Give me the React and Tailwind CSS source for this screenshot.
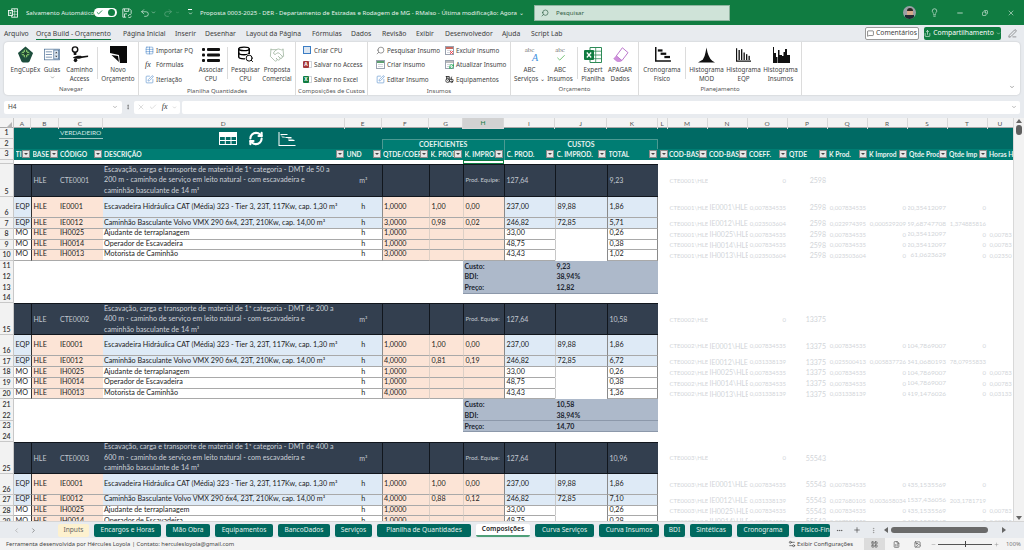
import {
  Search, Undo2, Redo2, ChevronDown, ChevronLeft, ChevronRight, X, Check, Lightbulb, Minus, Copy,
  MessageSquare, Share, PenLine, Tractor, Handshake, RefreshCw, Table, Plus, MoreHorizontal, MoreVertical,
  Database, SquarePen, Image, FileSpreadsheet, Settings2, LayoutGrid,
} from "lucide-react"
import clsx from "clsx"

const SHEET_COLS = "grid grid-cols-[14px_17px_27.5px_44px_242.5px_36.5px_47.5px_34px_41px_51px_52px_51px_9.5px_40px_40px_40px_40px_40px_40px_40px_40px_26px]"

/* ---------- small drawings ---------- */

function ExcelMark() {
  return (
    <svg viewBox="0 0 12 12" className="w-[10px] h-[10px]" fill="none" stroke="white" strokeWidth="1">
      <rect x="4.5" y="1" width="7" height="10" />
      <path d="M8 1v10M4.5 4.3h7M4.5 7.6h7" strokeWidth=".6" />
      <rect x=".5" y="3" width="5" height="6" fill="#107c41" />
      <path d="M1.8 4.4l2.4 3.2M4.2 4.4L1.8 7.6" strokeWidth=".8" />
    </svg>
  )
}

function EngLogo() {
  return (
    <svg viewBox="0 0 18 18" className="w-[17px] h-[17px]">
      <path d="M9 .5L17 7.5 13.5 16a2 2 0 0 1-2 1.5h-5a2 2 0 0 1-2-1.5L1 7.5z" fill="#1d4d3c" />
      <path d="M9 3l5 5-5 5-5-5z" fill="#7fc06b" />
      <path d="M7 6l4 4M11 6l-4 4M9 3.5v9M4.5 8h9" stroke="#17352c" strokeWidth=".9" />
    </svg>
  )
}

function GuiasIcon() {
  return (
    <svg viewBox="0 0 18 14" className="w-[16px] h-[13px]" fill="none" stroke="#4a6d94" strokeWidth=".8">
      <rect x=".5" y="1" width="17" height="12" fill="#fff" />
      <path d="M2 4h7M2 7h7M2 10h7" />
      <rect x="11" y="2" width="5.5" height="10" fill="#dce6f1" />
      <path d="M12.5 5.5l1.3-1.6 1.3 1.6zM12.5 8.5l1.3 1.6 1.3-1.6z" fill="#333" stroke="none" />
    </svg>
  )
}

function PathIcon() {
  return (
    <svg viewBox="0 0 20 18" className="w-[18px] h-[17px]" fill="#111">
      <circle cx="4.5" cy="3.5" r="3" fill="none" stroke="#111" strokeWidth="1.6" />
      <rect x="3" y="6.5" width="3" height="3" />
      <path d="M2 12.5c3-2 8-2.5 10-1.5l7-.8v1.6l-7 1.2c-2 1.2-7 1.2-10-.5z" />
      <circle cx="5" cy="15.5" r="2" />
    </svg>
  )
}

function NewBudgetIcon() {
  return (
    <svg viewBox="0 0 18 18" className="w-[17px] h-[17px]" fill="#0a0a0a">
      <path d="M0 0h18v18h-7.5L9.5 9.5 0 7.5z" />
      <path d="M1.5 9.5l7 1 1 6.5z" />
    </svg>
  )
}

function ListIcon() {
  return (
    <svg viewBox="0 0 18 16" className="w-[18px] h-[16px]" fill="#111">
      <rect x="0" y="1" width="3" height="3" rx="1" />
      <rect x="5" y="1" width="13" height="3" rx="1" />
      <rect x="0" y="6.5" width="3" height="3" rx="1" />
      <rect x="5" y="6.5" width="13" height="3" rx="1" />
      <rect x="0" y="12" width="3" height="3" rx="1" />
      <rect x="5" y="12" width="13" height="3" rx="1" />
    </svg>
  )
}

function DbSearch() {
  return (
    <span className="relative block w-[17px] h-[17px]">
      <Database className="w-[14px] h-[14px] text-black" strokeWidth={2.4} />
      <Search className="absolute right-0 bottom-0 w-[9px] h-[9px] text-black bg-white rounded-full" strokeWidth={2.6} />
    </span>
  )
}

function AppBadge({ letter, color }) {
  return (
    <span className="relative block w-[9px] h-[9px]">
      <span className="absolute right-0 top-[1px] w-[6px] h-[7px] bg-white border border-gray-300" />
      <span className={clsx("absolute left-0 top-[1px] w-[6px] h-[7px] rounded-[1px] text-white text-[5px] font-bold leading-[7px] text-center", color)}>{letter}</span>
    </span>
  )
}

function MiniTable({ accent, children }) {
  return (
    <span className="relative block w-[9px] h-[9px] border border-gray-400 bg-white">
      <span className={clsx("block h-[2px]", accent)} />
      <span className="block h-[1px] mt-[1px] mx-[1px] bg-gray-300" />
      <span className="block h-[1px] mt-[1px] mx-[1px] bg-gray-300" />
      {children}
    </span>
  )
}

function ExcelBig() {
  return (
    <svg viewBox="0 0 18 16" className="w-[18px] h-[16px]">
      <path d="M6 .5h11.5v15H6z" fill="#fff" stroke="#2e8b57" />
      <path d="M6 4.2h11.5M6 8h11.5M6 11.7h11.5M11.7.5v15" stroke="#2e8b57" strokeWidth=".8" />
      <rect x="0" y="3" width="10" height="10" rx="1" fill="#107c41" />
      <path d="M2.8 5.5l4.4 5M7.2 5.5l-4.4 5" stroke="#fff" strokeWidth="1.2" />
    </svg>
  )
}

function EraserIcon() {
  return (
    <svg viewBox="0 0 18 16" className="w-[17px] h-[15px]">
      <path d="M11 .8l6 5.2-6.5 8.5-6-5z" fill="#fff" stroke="#b86fc9" />
      <path d="M4.5 9.5l6 5-2 1h-3L1.8 12.5z" fill="#cf8fdc" stroke="#b86fc9" strokeWidth=".6" />
    </svg>
  )
}

function GanttIcon() {
  return (
    <svg viewBox="0 0 18 16" className="w-[17px] h-[15px]" fill="#111">
      <path d="M1 0h1.6v14H18v1.6H1z" />
      <rect x="4" y="2.5" width="5" height="2.4" />
      <rect x="7" y="6" width="6" height="2.4" />
      <rect x="11" y="9.5" width="6" height="2.4" />
    </svg>
  )
}

function HistoArea() {
  return (
    <svg viewBox="0 0 18 16" className="w-[17px] h-[16px]" fill="#111">
      <path d="M0 16l3-2 2-1 2-4 1-4 1-5 1 5 1 3 2 4 2 2 3 2z" />
    </svg>
  )
}

function HistoBars() {
  return (
    <svg viewBox="0 0 18 16" className="w-[15px] h-[14px]" fill="#111">
      <path d="M0 0h1.4v14.6H18V16H0z" />
      <rect x="3" y="2" width="1.6" height="12" />
      <rect x="6" y="1" width="1.6" height="13" />
      <rect x="9" y="5" width="1.6" height="9" />
      <rect x="12" y="7" width="1.6" height="7" />
      <rect x="15" y="9" width="1.6" height="5" />
    </svg>
  )
}

function HistoDense() {
  return (
    <svg viewBox="0 0 18 16" className="w-[18px] h-[16px]" fill="#111">
      <path d="M1 0h1v16H1zM2 6h2v10H2zM4 10h1.5v6H4zM6 3h1.5v13H6zM7.5 8H10v8H7.5zM10 9h1.5v7H10zM11.5 5H13v11h-1.5zM13 2h2v14h-2zM15 8h3v8h-3z" />
    </svg>
  )
}

/* ---------- window chrome ---------- */

function TitleBar() {
  return (
    <div className="h-[25px] bg-[#107c41] flex items-center text-white text-[6.1px] font-['Noto_Sans',sans-serif] shrink-0">
      <span className="ml-[8px] w-[18px]"><ExcelMark /></span>
      <span className="w-[68px] opacity-90 whitespace-nowrap">Salvamento Automático</span>
      <span className="w-[23px] h-[9px] rounded-full bg-white flex items-center justify-between px-[2px]">
        <Check className="w-[7px] h-[7px] text-[#107c41]" strokeWidth={3} />
        <span className="w-[7px] h-[7px] rounded-full bg-[#107c41]" />
      </span>
      <svg viewBox="0 0 12 12" className="ml-[5px] w-[10px] h-[10px]" fill="none" stroke="white" strokeWidth=".9">
        <path d="M1 1h8l2 2v4M1 1v10h4M3 1v3h5V1M3 11V7h3" />
        <path d="M7.5 9.5a2 2 0 0 1 3.5-1M11 10a2 2 0 0 1-3.5.8" />
      </svg>
      <Undo2 className="ml-[8px] w-[10px] h-[10px]" strokeWidth={1.4} />
      <ChevronDown className="ml-[1px] w-[5px] h-[5px]" />
      <Redo2 className="ml-[7px] w-[10px] h-[10px] opacity-40" strokeWidth={1.4} />
      <ChevronDown className="ml-[2px] w-[5px] h-[5px] opacity-40" />
      <span className="ml-[7px] w-[6px] flex flex-col items-center gap-[1px]">
        <span className="w-[4px] h-[1px] bg-white" />
        <ChevronDown className="w-[5px] h-[5px]" strokeWidth={3} />
      </span>
      <span className="ml-[7px] w-[325px] whitespace-nowrap opacity-90">Proposta 0003-2025 - DER - Departamento de Estradas e Rodagem de MG - RMalso - Última modificação: Agora ⌄</span>
      <div className="ml-[9px] w-[196px] h-[16px] bg-[#cfe3d8] border border-[#8fb5a0] flex items-center text-[#2f5d45]">
        <Search className="ml-[6px] w-[8px] h-[8px] -scale-x-100" />
        <span className="ml-[7px]">Pesquisar</span>
      </div>
      <div className="ml-auto flex items-center">
        <span className="w-[13px] h-[13px] rounded-full bg-[#9aa0a6] overflow-hidden flex flex-col items-center">
          <span className="mt-[2px] w-[6px] h-[3px] rounded-t-full bg-[#2b2622]" />
          <span className="w-[6px] h-[4px] bg-[#d4a98a]" />
          <span className="w-[9px] h-[4px] bg-[#1f2a33]" />
        </span>
        <Lightbulb className="ml-[13.5px] w-[9px] h-[9px]" strokeWidth={1.5} />
        <Minus className="ml-[17.5px] w-[8px] h-[8px]" />
        <Copy className="ml-[18px] w-[6px] h-[6px] -scale-x-100" strokeWidth={2} />
        <X className="ml-[19px] mr-[9px] w-[8px] h-[8px]" strokeWidth={1.5} />
      </div>
    </div>
  )
}

const MENU = [
  { name: "Arquivo", w: "w-[32px]" },
  { name: "Orça Build - Orçamento", w: "w-[87px]", active: true },
  { name: "Página Inicial", w: "w-[52px]" },
  { name: "Inserir", w: "w-[30px]" },
  { name: "Desenhar", w: "w-[41px]" },
  { name: "Layout da Página", w: "w-[66px]" },
  { name: "Fórmulas", w: "w-[39px]" },
  { name: "Dados", w: "w-[31px]" },
  { name: "Revisão", w: "w-[34px]" },
  { name: "Exibir", w: "w-[29px]" },
  { name: "Desenvolvedor", w: "w-[57px]" },
  { name: "Ajuda", w: "w-[29px]" },
  { name: "Script Lab", w: "w-[40px]" },
]

function MenuBar() {
  return (
    <div className="h-[17px] bg-[#e8ebef] flex items-center pl-[4px] text-[6.8px] text-[#3d3d3d] shrink-0">
      {MENU.map((m) => (
        <div key={m.name} className={clsx(m.w, "whitespace-nowrap")}>
          <span className={clsx("inline-block leading-[11px] border-b-[1.5px]", m.active ? "border-[#107c41]" : "border-transparent")}>{m.name}</span>
        </div>
      ))}
      <div className="ml-auto mr-[7px] flex items-center">
        <div className="w-[54px] h-[13px] bg-white border border-[#9a9a9a] rounded-[2px] flex items-center justify-center gap-[2px]">
          <MessageSquare className="w-[7px] h-[7px]" />
          <span>Comentários</span>
        </div>
        <div className="ml-[5px] w-[77px] h-[13px] bg-[#107c41] rounded-[2px] text-white flex items-center justify-center gap-[2px]">
          <Share className="w-[7px] h-[7px]" />
          <span>Compartilhamento</span>
          <ChevronDown className="w-[5px] h-[5px]" />
        </div>
        <PenLine className="ml-[7px] w-[9px] h-[9px]" strokeWidth={1.3} />
      </div>
    </div>
  )
}

function BigTool({ icon, lines, w, caret }) {
  return (
    <div className={clsx(w, "flex flex-col items-center shrink-0 leading-[8.5px] text-center whitespace-nowrap")}>
      <div className="h-[17px] flex items-center justify-center mb-[3px]">{icon}</div>
      {lines.map((l) => <span key={l}>{l}</span>)}
      {caret && <ChevronDown className="w-[5px] h-[5px]" />}
    </div>
  )
}

function SmallTool({ icon, label, w = "w-[52px]" }) {
  return (
    <div className={clsx(w, "h-[14.5px] flex items-center whitespace-nowrap")}>
      <span className="w-[11px] shrink-0 flex items-center">{icon}</span>
      <span>{label}</span>
    </div>
  )
}

function RibbonGroup({ label, w, border = true, children }) {
  return (
    <div className={clsx(w, "h-full flex flex-col shrink-0", border && "border-r border-[#dcdcdc]")}>
      <div className="flex-1 flex">{children}</div>
      <div className="h-[9px] mb-[1px] text-center text-[6px] leading-[9px] text-[#555] whitespace-nowrap">{label}</div>
    </div>
  )
}

const VDiv = () => <div className="w-px h-[32px] mt-[5px] bg-[#dcdcdc] shrink-0" />

function Ribbon() {
  return (
    <div className="mx-[4px] h-[53px] bg-white rounded-[4px] shadow-[0_0_2px_rgba(0,0,0,0.2)] flex text-[6.3px] text-[#444] shrink-0 relative">
      <RibbonGroup label="Navegar" w="w-[135px]">
        <div className="flex pt-[4px] pl-[8px]">
          <BigTool w="w-[27px]" icon={<EngLogo />} lines={["EngCupEx"]} />
          <BigTool w="w-[26px]" icon={<GuiasIcon />} lines={["Guias"]} caret />
          <BigTool w="w-[29px]" icon={<PathIcon />} lines={["Caminho", "Access"]} />
          <div className="ml-[3px] -mt-[4px]"><VDiv /></div>
          <BigTool w="w-[40px]" icon={<NewBudgetIcon />} lines={["Novo", "Orçamento"]} />
        </div>
      </RibbonGroup>
      <RibbonGroup label="Planilha Quantidades" w="w-[157px]">
        <div className="pl-[6px] pt-[1px]">
          <SmallTool icon={<Table className="w-[9px] h-[9px] text-[#3b7dc4]" strokeWidth={1.4} />} label="Importar PQ" />
          <SmallTool icon={<span className="font-['Liberation_Serif',serif] italic text-[8px] leading-none text-[#333]">fx</span>} label="Fórmulas" />
          <SmallTool icon={<SquarePen className="w-[9px] h-[9px] text-[#3b7dc4]" strokeWidth={1.4} />} label="Iteriação" />
        </div>
        <div className="flex pt-[4px]">
          <BigTool w="w-[28px]" icon={<ListIcon />} lines={["Associar", "CPU"]} />
          <div className="ml-[2px] mr-[1px] -mt-[4px]"><VDiv /></div>
          <BigTool w="w-[33px]" icon={<DbSearch />} lines={["Pesquisar", "CPU"]} />
          <BigTool w="w-[30px]" icon={<Handshake className="w-[16px] h-[16px] text-[#9fb59f]" strokeWidth={1.2} />} lines={["Proposta", "Comercial"]} />
        </div>
      </RibbonGroup>
      <RibbonGroup label="Composições de Custos" w="w-[72px]">
        <div className="pl-[7px] pt-[1px]">
          <SmallTool w="w-[60px]" icon={<span className="w-[8px] h-[8px] border border-[#3b7dc4] bg-[#dce6f1] block" />} label="Criar CPU" />
          <SmallTool w="w-[60px]" icon={<AppBadge letter="A" color="bg-[#a4373a]" />} label="Salvar no Access" />
          <SmallTool w="w-[60px]" icon={<AppBadge letter="X" color="bg-[#107c41]" />} label="Salvar no Excel" />
        </div>
      </RibbonGroup>
      <RibbonGroup label="Insumos" w="w-[143px]">
        <div className="pl-[8px] pt-[1px]">
          <SmallTool w="w-[69px]" icon={<Search className="w-[9px] h-[9px] text-[#777] -scale-x-100" />} label="Pesquisar Insumo" />
          <SmallTool w="w-[69px]" icon={<MiniTable accent="bg-[#5c9e6f]" />} label="Criar insumo" />
          <SmallTool w="w-[69px]" icon={<SquarePen className="w-[9px] h-[9px] text-[#3b7dc4]" strokeWidth={1.4} />} label="Editar Insumo" />
        </div>
        <div className="pt-[1px]">
          <SmallTool w="w-[65px]" icon={<MiniTable accent="bg-[#c9695f]"><X className="absolute -right-[1px] -bottom-[1px] w-[5px] h-[5px] text-red-500" strokeWidth={4} /></MiniTable>} label="Excluir insumo" />
          <SmallTool w="w-[65px]" icon={<MiniTable accent="bg-[#bbbbbb]"><RefreshCw className="absolute -right-[1px] -bottom-[1px] w-[5px] h-[5px] text-green-600" strokeWidth={3} /></MiniTable>} label="Atualizar Insumo" />
          <SmallTool w="w-[65px]" icon={<Tractor className="w-[9px] h-[9px] text-[#222]" strokeWidth={2} />} label="Equipamentos" />
        </div>
      </RibbonGroup>
      <RibbonGroup label="Orçamento" w="w-[128px]">
        <div className="flex pt-[4px] pl-[2px]">
          <BigTool w="w-[33px]" icon={<span className="relative block w-[17px] h-[16px] font-['Liberation_Serif',serif] text-[7px] leading-[7px] text-[#777]">abc<span className="absolute right-0 bottom-0 text-[10px] leading-[10px] italic text-[#3b8ee0]">A</span></span>} lines={["ABC", "Serviços ⌄"]} />
          <BigTool w="w-[28px]" icon={<span className="relative block w-[14px] h-[16px] font-['Liberation_Serif',serif] text-[7px] leading-[7px] text-[#777]">abc<Check className="absolute right-[1px] bottom-0 w-[10px] h-[10px] text-[#5cb85c]" /></span>} lines={["ABC", "Insumos"]} />
          <div className="ml-[3px] mr-[1px] -mt-[4px]"><VDiv /></div>
          <BigTool w="w-[28px]" icon={<ExcelBig />} lines={["Expert", "Planilha"]} />
          <BigTool w="w-[26px]" icon={<EraserIcon />} lines={["APAGAR", "Dados"]} />
        </div>
      </RibbonGroup>
      <RibbonGroup label="Planejamento" w="w-[163px]">
        <div className="flex pt-[4px] pl-[4px]">
          <BigTool w="w-[38px]" icon={<GanttIcon />} lines={["Cronograma", "Físico"]} />
          <div className="ml-[4px] mr-[2px] -mt-[4px]"><VDiv /></div>
          <BigTool w="w-[37px]" icon={<HistoArea />} lines={["Histograma", "MOD"]} />
          <BigTool w="w-[37px]" icon={<HistoBars />} lines={["Histograma", "EQP"]} />
          <BigTool w="w-[37px]" icon={<HistoDense />} lines={["Histograma", "Insumos"]} />
        </div>
      </RibbonGroup>
      <ChevronDown className="absolute right-[5px] bottom-[5px] w-[6px] h-[6px] text-[#555]" />
    </div>
  )
}

function FormulaBar() {
  return (
    <div className="h-[23px] bg-[#e8ebef] flex items-center px-[4px] gap-[2px] pt-[1px] text-[6.5px] text-[#444] shrink-0">
      <div className="w-[118px] h-[13px] bg-white rounded-[2px] flex items-center justify-between px-[4px]">
        H4
        <ChevronDown className="w-[6px] h-[6px] text-[#777]" />
      </div>
      <MoreVertical className="mx-[1px] w-[6px] h-[6px]" />
      <div className="w-[46px] h-[13px] bg-white rounded-[2px] flex items-center justify-around px-[1px] text-[#aaa]">
        <X className="w-[8px] h-[8px]" strokeWidth={1.2} />
        <Check className="w-[8px] h-[8px]" strokeWidth={1.2} />
        <span className="font-['Liberation_Serif',serif] italic text-[8px] text-[#333]">fx</span>
        <ChevronDown className="w-[5px] h-[5px]" />
      </div>
      <div className="flex-1 h-[13px] bg-white rounded-[2px] flex items-center justify-end pr-[3px]">
        <ChevronDown className="w-[6px] h-[6px] text-[#777]" />
      </div>
    </div>
  )
}

/* ---------- sheet ---------- */

const LETTERS = ["A", "B", "C", "D", "E", "F", "G", "H", "I", "J", "K", "L", "M", "N", "O", "P", "Q", "R", "S", "T", "U"]

function ColumnHeader() {
  return (
    <div className={clsx(SHEET_COLS, "h-[10px] bg-[#f3f3f3] text-[6.5px] text-[#555] border-b border-[#a8a8a8]")}>
      <div className="border-r border-[#c8c8c8] flex items-end justify-end p-[1px]">
        <span className="w-0 h-0 border-l-[6px] border-l-transparent border-b-[6px] border-b-[#b5b5b5]" />
      </div>
      {LETTERS.map((l) => (
        <div key={l} className={clsx("flex items-center justify-center border-r border-[#d8d8d8]", l === "H" && "bg-[#d2d2d2] text-[#107c41] border-b border-[#107c41]")}>{l}</div>
      ))}
    </div>
  )
}

function RowNum({ n, end }) {
  return (
    <div className={clsx("bg-[#f2f2f2] border-r border-b border-[#c8c8c8] text-[7px] font-semibold text-[#333] flex justify-center leading-[9px] overflow-hidden", end ? "items-end" : "items-center")}>{n}</div>
  )
}

function FilterCell({ label, className }) {
  return (
    <div className={clsx("flex items-center min-w-0 pl-[1.5px] pr-[1px] text-[6.7px] font-bold text-[#e8f3f1] whitespace-nowrap", className)}>
      <span className="flex-1 min-w-0 overflow-hidden">{label}</span>
      <span className="w-[8px] h-[8px] shrink-0 bg-[#e6e6e6] border border-[#8a8a8a] flex items-center justify-center">
        <span className="w-0 h-0 border-x-[2px] border-x-transparent border-t-[2.5px] border-t-[#444]" />
      </span>
    </div>
  )
}

const HEAD_LABELS = ["TIPO", "BASE", "CÓDIGO", "DESCRIÇÃO", "UND", "QTDE/COEF", "K. PROD", "K. IMPROD", "C. PROD.", "C. IMPROD.", "TOTAL", "", "COD-BASE", "COD-BASE", "COEFF.", "QTDE", "K Prod.", "K Improd", "Qtde Prod", "Qtde Imp"]

function SheetHead() {
  return (
    <>
      <div className={clsx(SHEET_COLS, "grid-rows-[10.5px_10px] bg-[#006a64] text-white")}>
        <RowNum n={1} />
        <div className="col-span-2 row-span-2" />
        <div className="border-b border-[#9ac4bf] text-[6.5px] text-[#d6e9e6] flex items-center pl-[1.5px]">VERDADEIRO</div>
        <div className="row-span-2 flex items-center pl-[116px] pt-[1px]">
          <svg viewBox="0 0 18 13" className="w-[18px] h-[13px]" fill="none" stroke="white" strokeWidth="1">
            <rect x=".5" y=".5" width="17" height="12" />
            <path d="M.5 4.5h17M.5 8.5h17M6.3.5v12M12 .5v12" />
            <rect x=".5" y=".5" width="17" height="3" fill="white" />
          </svg>
          <RefreshCw className="ml-[11px] w-[16px] h-[15px]" strokeWidth={3.4} />
          <svg viewBox="0 0 18 14" className="ml-[13px] w-[19px] h-[14px]" fill="white">
            <path d="M1 0h1v13h16v1H1z" />
            <path d="M3 2h7v1H3zM8 5h6v1H8zM11 8h6v1h-6z" />
            <path d="M3 3l5 2v1H5zM10 6h3l4 2h-6z" opacity=".5" />
          </svg>
        </div>
        <div className="row-span-2" />
        <div className="col-start-7 col-span-3 row-span-1" />
        <div className="col-span-3" />
        <div className="col-span-10" />
        <RowNum n={2} />
        <div className="col-start-4" />
        <div className="col-start-7 col-span-3 bg-[#007d73] border-l border-t border-[#4b9a92] text-[7px] font-bold text-[#e4f1ef] flex items-center justify-center">COEFICIENTES</div>
        <div className="col-span-3 bg-[#007d73] border-l border-t border-r border-[#4b9a92] text-[7px] font-bold text-[#e4f1ef] flex items-center justify-center">CUSTOS</div>
      </div>
      <div className={clsx(SHEET_COLS, "h-[11px] bg-[#007d73]")}>
        <RowNum n={3} />
        {HEAD_LABELS.map((l, i) => <FilterCell key={i} label={l} className={i === 8 ? "border-l border-[#4b9a92]" : ""} />)}
        <div className="text-[6.7px] font-bold text-[#e8f3f1] pl-[1.5px] whitespace-nowrap overflow-hidden flex items-center">Horas H</div>
      </div>
      <div className={clsx(SHEET_COLS, "h-[4.5px]")}>
        <RowNum n="" />
        <div className="col-start-9 border border-[#107c41]" />
      </div>
    </>
  )
}

const HELP_SIZES = ["text-[6px]", "text-[7px]", "text-[6px]", "text-[7px]", "text-[6px]", "text-[6px]", "text-[6.5px]", "text-[6px]", "text-[6px]"]

function HelperCells({ values }) {
  return (
    <>
      <div />
      {values.map((v, i) => (
        <div key={i} className={clsx(HELP_SIZES[i], "flex items-center text-[#d2d5d9] whitespace-nowrap overflow-hidden px-[1.5px]", i < 2 || i === 8 ? "justify-start pl-[2px]" : "justify-end")}>{v}</div>
      ))}
    </>
  )
}

function TitleRow({ n, code, desc, total, h, help }) {
  const cell = "border-t border-b border-[#11161d] bg-[#333f4f] flex items-center px-[1.5px] whitespace-nowrap overflow-hidden text-[7px] text-[#c3c9d1]"
  return (
    <div className={clsx(SHEET_COLS, h)}>
      <RowNum n={n} end />
      <div className={cell} />
      <div className={clsx(cell, "border-l border-l-[#11161d]")}>HLE</div>
      <div className={cell}>{code}</div>
      <div className={clsx(cell, "!whitespace-normal !text-[7.15px] !pr-[9px] leading-[10.5px] text-[#ccd1d8]")}>{desc}</div>
      <div className={clsx(cell, "justify-center")}>m³</div>
      <div className={clsx(cell, "border-l border-l-[#11161d]")} />
      <div className={clsx(cell, "border-l border-l-[#11161d]")} />
      <div className={clsx(cell, "border-l border-l-[#11161d] !text-[5.9px]")}>Prod. Equipe:</div>
      <div className={clsx(cell, "border-l border-l-[#11161d]")}>127,64</div>
      <div className={clsx(cell, "border-l border-l-[#11161d]")} />
      <div className={clsx(cell, "border-l border-l-[#11161d]")}>{total}</div>
      <HelperCells values={help} />
    </div>
  )
}

function DataRow({ n, eqp, h, code, desc, vals, help }) {
  const line = "border-b border-[#a9a9a9] flex items-center px-[1.5px] whitespace-nowrap overflow-hidden text-[7.2px] text-[#1c1c1c]"
  const tint = eqp ? "bg-[#deeaf6]" : "bg-white"
  const peach = "bg-[#fce4d6]"
  return (
    <div className={clsx(SHEET_COLS, h)}>
      <RowNum n={n} end={eqp && h === "h-[21px]"} />
      <div className={clsx(line, tint)}>{eqp ? "EQP" : "MO"}</div>
      <div className={clsx(line, peach, "border-l border-l-[#333]")}>HLE</div>
      <div className={clsx(line, peach)}>{code}</div>
      <div className={clsx(line, tint)}>{desc}</div>
      <div className={clsx(line, tint, "justify-center")}>h</div>
      <div className={clsx(line, peach, "border-l border-l-[#8a8a8a]")}>{vals[0]}</div>
      <div className={clsx(line, peach, "border-l border-l-[#ddd0c6]")}>{vals[1]}</div>
      <div className={clsx(line, peach, "border-l border-l-[#ddd0c6]")}>{vals[2]}</div>
      <div className={clsx(line, tint, "border-l border-l-[#8a8a8a]")}>{vals[3]}</div>
      <div className={clsx(line, tint, "border-l border-l-[#c8c8c8]", !eqp && "border-b-white")}>{vals[4]}</div>
      <div className={clsx(line, tint, "border-l border-r border-l-[#8a8a8a] border-r-[#8a8a8a]")}>{vals[5]}</div>
      <HelperCells values={help} />
    </div>
  )
}

function SummaryRow({ n, label, value }) {
  return (
    <div className={clsx(SHEET_COLS, "h-[10.7px]")}>
      <RowNum n={n} />
      <div className="col-start-9 col-span-2 bg-[#adb9ca] border-b border-[#8c98aa] flex items-center px-[1.5px] text-[7px] font-bold text-[#1c2530]">{label}</div>
      <div className="col-span-2 bg-[#adb9ca] border-b border-[#8c98aa] flex items-center px-[1.5px] text-[7px] font-bold text-[#1c2530]">{value}</div>
    </div>
  )
}

function BlankRow({ n }) {
  return (
    <div className={clsx(SHEET_COLS, "h-[10.7px]")}>
      <RowNum n={n} />
    </div>
  )
}

const DESC = {
  exc: "Escavadeira Hidráulica CAT (Média) 323 - Tier 3, 23T, 117Kw, cap. 1,30 m³",
  cam: "Caminhão Basculante Volvo VMX 290 6x4, 23T, 210Kw, cap. 14,00 m³",
  aju: "Ajudante de terraplanagem",
  ope: "Operador de Escavadeira",
  mot: "Motorista de Caminhão",
}

const title = (a, b) => `Escavação, carga e transporte de material de 1ª categoria - DMT de ${a} a ${b} m - caminho de serviço em leito natural - com escavadeira e caminhão basculante de 14 m³`

function help(cte, ie, coef, qtde, kp, ki, qp, qi, hh) {
  return [`${cte}\\HLE`, ie ? `${ie}\\HLE` : "", coef, qtde, kp, ki, qp, qi, hh]
}

function Sheet() {
  return (
    <div className="flex h-[403px] overflow-hidden shrink-0 font-['Lato',sans-serif]">
      <div className="w-[1013px] overflow-hidden bg-white">
        <ColumnHeader />
        <SheetHead />

        <TitleRow n={5} h="h-[33px]" code="CTE0001" desc={title(50, 200)} total="9,23" help={help("CTE0001", "", "0", "2598")} />
        <DataRow n={6} eqp h="h-[21px]" code="IE0001" desc={DESC.exc} vals={["1,0000", "1,00", "0,00", "237,00", "89,88", "1,86"]} help={help("CTE0001", "IE0001", "0,007834535", "2598", "0,007834535", "0", "20,35412097", "0")} />
        <DataRow n={7} eqp h="h-[11px]" code="IE0012" desc={DESC.cam} vals={["3,0000", "0,98", "0,02", "246,82", "72,85", "5,71"]} help={help("CTE0001", "IE0012", "0,023503604", "2598", "0,022974395", "0,000529209", "59,68747708", "1,374885816")} />
        <DataRow n={8} h="h-[10.5px]" code="IH0025" desc={DESC.aju} vals={["1,0000", "", "", "33,00", "", "0,26"]} help={help("CTE0001", "IH0025", "0,007834535", "2598", "0,007834535", "0", "20,35412097", "0", "0,00783")} />
        <DataRow n={9} h="h-[10.5px]" code="IH0014" desc={DESC.ope} vals={["1,0000", "", "", "48,75", "", "0,38"]} help={help("CTE0001", "IH0014", "0,007834535", "2598", "0,007834535", "0", "20,35412097", "0", "0,00783")} />
        <DataRow n={10} h="h-[10.7px]" code="IH0013" desc={DESC.mot} vals={["3,0000", "", "", "43,43", "", "1,02"]} help={help("CTE0001", "IH0013", "0,023503604", "2598", "0,023503604", "0", "61,0623629", "0", "0,02350")} />
        <SummaryRow n={11} label="Custo:" value="9,23" />
        <SummaryRow n={12} label="BDI:" value="38,94%" />
        <SummaryRow n={13} label="Preço:" value="12,82" />
        <BlankRow n={14} />

        <TitleRow n={15} h="h-[32px]" code="CTE0002" desc={title(200, 400)} total="10,58" help={help("CTE0002", "", "0", "13375")} />
        <DataRow n={16} eqp h="h-[21px]" code="IE0001" desc={DESC.exc} vals={["1,0000", "1,00", "0,00", "237,00", "89,88", "1,86"]} help={help("CTE0002", "IE0001", "0,007834535", "13375", "0,007834535", "0", "104,7869007", "0")} />
        <DataRow n={17} eqp h="h-[10.7px]" code="IE0012" desc={DESC.cam} vals={["4,0000", "0,81", "0,19", "246,82", "72,85", "6,72"]} help={help("CTE0002", "IE0012", "0,031338139", "13375", "0,025500413", "0,005837726", "341,0680193", "78,07955833")} />
        <DataRow n={18} h="h-[10.7px]" code="IH0025" desc={DESC.aju} vals={["1,0000", "", "", "33,00", "", "0,26"]} help={help("CTE0002", "IH0025", "0,007834535", "13375", "0,007834535", "0", "104,7869007", "0", "0,00783")} />
        <DataRow n={19} h="h-[10.7px]" code="IH0014" desc={DESC.ope} vals={["1,0000", "", "", "48,75", "", "0,38"]} help={help("CTE0002", "IH0014", "0,007834535", "13375", "0,007834535", "0", "104,7869007", "0", "0,00783")} />
        <DataRow n={20} h="h-[10.7px]" code="IH0013" desc={DESC.mot} vals={["4,0000", "", "", "43,43", "", "1,36"]} help={help("CTE0002", "IH0013", "0,031338139", "13375", "0,031338139", "0", "419,1476026", "0", "0,03133")} />
        <SummaryRow n={21} label="Custo:" value="10,58" />
        <SummaryRow n={22} label="BDI:" value="38,94%" />
        <SummaryRow n={23} label="Preço:" value="14,70" />
        <BlankRow n={24} />

        <TitleRow n={25} h="h-[32px]" code="CTE0003" desc={title(400, 600)} total="10,96" help={help("CTE0003", "", "0", "55543")} />
        <DataRow n={26} eqp h="h-[21px]" code="IE0001" desc={DESC.exc} vals={["1,0000", "1,00", "0,00", "237,00", "89,88", "1,86"]} help={help("CTE0003", "IE0001", "0,007834535", "55543", "0,007834535", "0", "435,1535569", "0")} />
        <DataRow n={27} eqp h="h-[10.7px]" code="IE0012" desc={DESC.cam} vals={["4,0000", "0,88", "0,12", "246,82", "72,85", "7,10"]} help={help("CTE0003", "IE0012", "0,031338139", "55543", "0,027680105", "0,003658034", "1537,436056", "203,1781719")} />
        <DataRow n={28} h="h-[10.7px]" code="IH0025" desc={DESC.aju} vals={["1,0000", "", "", "33,00", "", "0,26"]} help={help("CTE0003", "IH0025", "0,007834535", "55543", "0,007834535", "0", "435,1535569", "0", "0,00783")} />
        <DataRow n={29} h="h-[10.7px]" code="IH0014" desc={DESC.ope} vals={["1,0000", "", "", "48,75", "", "0,38"]} help={help("CTE0003", "IH0014", "0,007834535", "55543", "0,007834535", "0", "435,1535569", "0", "0,00783")} />
      </div>
      <div className="flex-1 bg-[#f2f2f2] border-l border-[#d8d8d8] flex flex-col items-center">
        <span className="mt-[1px] w-0 h-0 border-x-[3px] border-x-transparent border-b-[4px] border-b-[#666]" />
        <span className="mt-[2px] w-[6px] h-[10px] rounded-full bg-[#5f5f5f]" />
        <span className="mt-auto mb-[1px] w-0 h-0 border-x-[3px] border-x-transparent border-t-[4px] border-t-[#666]" />
      </div>
    </div>
  )
}

const TABS = [
  { name: "Encargos e Horas", w: "w-[67px]" },
  { name: "Mão Obra", w: "w-[44px]" },
  { name: "Equipamentos", w: "w-[58px]" },
  { name: "BancoDados", w: "w-[52px]" },
  { name: "Serviços", w: "w-[37px]" },
  { name: "Planilha de Quantidades", w: "w-[94px]" },
  { name: "Composições", w: "w-[54px]", active: true },
  { name: "Curva Serviços", w: "w-[59px]" },
  { name: "Curva Insumos", w: "w-[60px]" },
  { name: "BDI", w: "w-[21px]" },
  { name: "Sintéticas", w: "w-[42px]" },
  { name: "Cronograma", w: "w-[52px]" },
  { name: "Físico-Financeiro", w: "w-[36px]", cut: true },
]

function SheetTabs() {
  return (
    <div className="h-[17px] bg-[#e8ebef] flex items-center text-[6.6px] font-['Noto_Sans',sans-serif] shrink-0 border-t border-[#d5d5d5]">
      <ChevronLeft className="ml-[13px] w-[7px] h-[7px] text-[#999]" />
      <ChevronRight className="ml-[10px] w-[7px] h-[7px] text-[#555]" />
      <div className="ml-[21px] w-[31px] h-[13px] rounded-[2px] bg-[#fdf1cf] text-[#666] flex items-center justify-center">Inputs</div>
      <div className="ml-[5px] flex gap-[5px] w-[738px] overflow-hidden">
        {TABS.map((t) => (
          <div key={t.name} className={clsx(t.w, "h-[13px] shrink-0 rounded-[2px] flex items-center whitespace-nowrap overflow-hidden", t.cut ? "pl-[7px] justify-start" : "justify-center", t.active ? "bg-white text-[#1c1c1c] font-semibold border-b-2 border-[#4f9f78]" : "bg-[#00695f] text-[#e2efec]")}>{t.name}</div>
        ))}
      </div>
      <MoreHorizontal className="ml-[4px] w-[7px] h-[7px] text-[#444]" />
      <Plus className="ml-[10px] w-[8px] h-[8px] text-[#444]" />
      <MoreVertical className="ml-[9px] w-[7px] h-[7px] text-[#888]" />
      <div className="ml-[7px] w-[127px] flex items-center gap-[3px]">
        <span className="w-0 h-0 border-y-[3px] border-y-transparent border-r-[4px] border-r-[#666]" />
        <span className="w-[97px] h-[6px] rounded-full bg-[#6a6a6a]" />
        <span className="ml-auto mr-[5px] w-0 h-0 border-y-[3px] border-y-transparent border-l-[4px] border-l-[#666]" />
      </div>
    </div>
  )
}

function StatusBar() {
  return (
    <div className="h-[12px] bg-[#f3f3f3] flex items-center text-[5.8px] text-[#444] font-['Noto_Sans',sans-serif] shrink-0 pl-[6px]">
      <span>Ferramenta desenvolvida por Hércules Loyola | Contato: herculesloyola@gmail.com</span>
      <div className="ml-auto flex items-center h-full">
        <Settings2 className="w-[8px] h-[8px]" />
        <span className="ml-[1px] w-[57px] whitespace-nowrap">Exibir Configurações</span>
        <span className="ml-[10px] w-[21px] h-full bg-[#dcdcdc] flex items-center justify-center"><LayoutGrid className="w-[7px] h-[7px]" /></span>
        <FileSpreadsheet className="ml-[7.5px] w-[7px] h-[7px]" />
        <Image className="ml-[14px] w-[7px] h-[7px]" />
        <Minus className="ml-[10.5px] w-[5px] h-[5px] text-[#888]" />
        <span className="relative ml-[2px] w-[54px] h-px bg-[#555]">
          <span className="absolute left-[26.5px] -top-[2.5px] w-[1.5px] h-[6px] bg-[#444]" />
        </span>
        <Plus className="ml-[2px] w-[5px] h-[5px] text-[#888]" />
        <span className="ml-[7px] w-[18px] text-[5.8px] text-[#777]">100%</span>
      </div>
    </div>
  )
}

export default function App() {
  return (
    <div className="w-[1024px] h-[550px] overflow-hidden flex flex-col bg-[#e8ebef] font-['Noto_Sans',sans-serif]">
      <TitleBar />
      <MenuBar />
      <Ribbon />
      <FormulaBar />
      <Sheet />
      <SheetTabs />
      <StatusBar />
    </div>
  )
}
